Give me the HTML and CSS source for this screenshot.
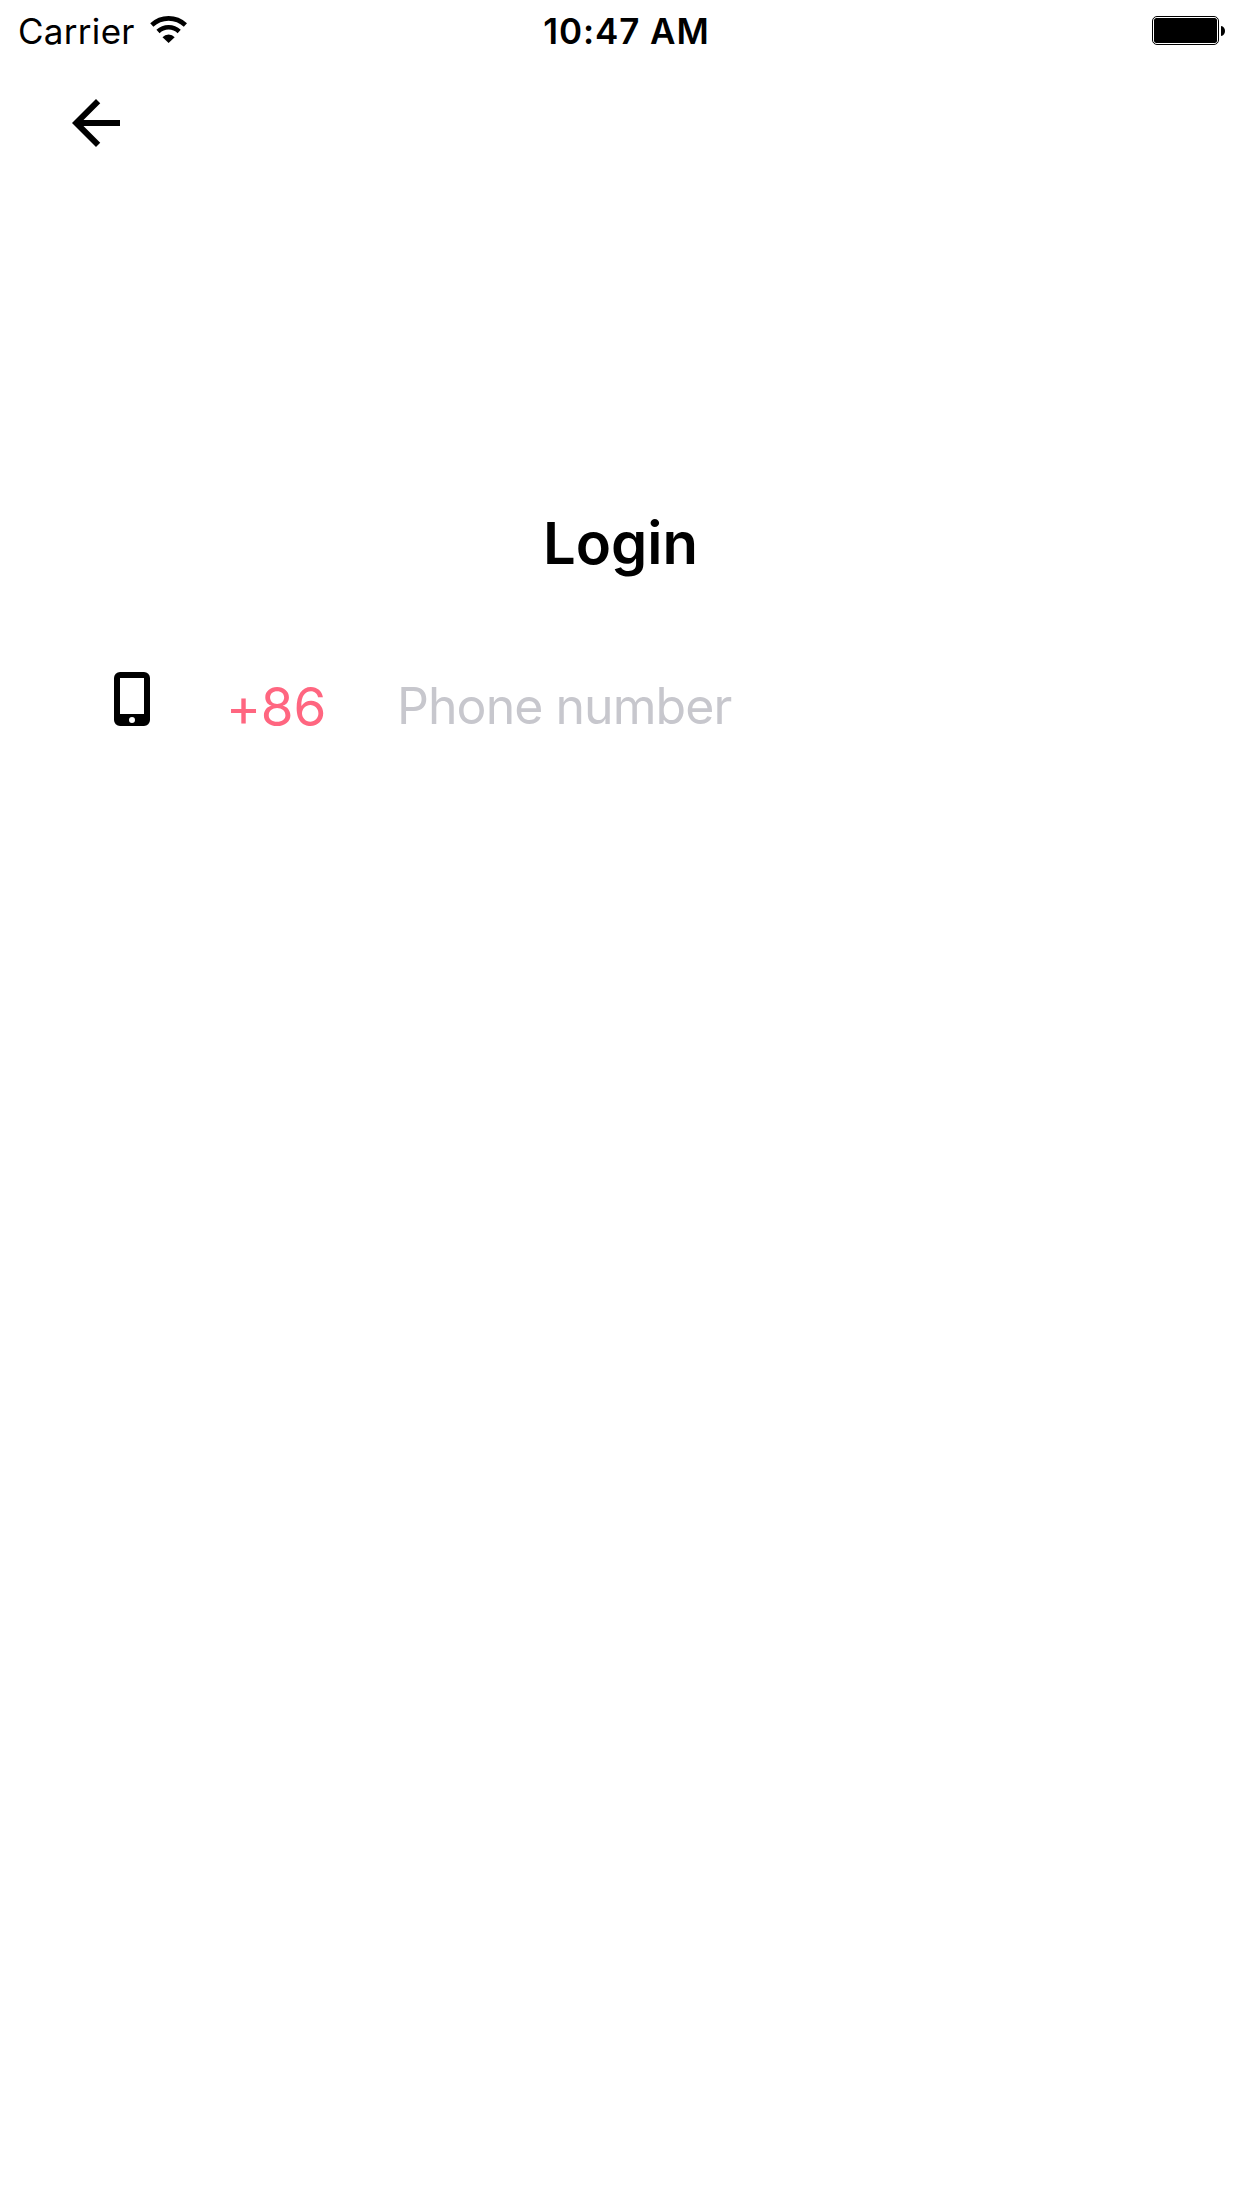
FILE: index.html
```html
<!DOCTYPE html>
<html lang="en">
<head>
<meta charset="utf-8">
<title>Login</title>
<link rel="stylesheet" href="styles.css">
</head>
<body>
<header class="status-bar">
  <div class="network">
    <span class="carrier">Carrier</span>
    <svg class="wifi" width="38" height="28" viewBox="0 0 38 28" aria-hidden="true">
      <g fill="none" stroke="#000" stroke-width="4.6">
        <path d="M1.800 9a24.500 24.500 0 0 1 33.600 0"/>
        <path d="M8 15.500a15.500 15.500 0 0 1 21.200 0"/>
      </g>
      <path d="M12.500 21.300a8 8 0 0 1 12.200 0L18.600 27z"/>
    </svg>
  </div>
  <time class="clock">10:47 AM</time>
  <svg class="battery" width="74" height="30" viewBox="0 0 74 30" aria-hidden="true">
    <rect x=".5" y=".5" width="66" height="28" rx="4.5" fill="none" stroke="#000"/>
    <rect x="2" y="2" width="63" height="25" rx="2.5"/>
    <path d="M69 10c2.700.4 4 2.300 4 5s-1.300 4.600-4 5z"/>
  </svg>
</header>
<nav class="nav-bar">
  <svg class="back" width="72" height="72" viewBox="0 0 24 24" role="img" aria-label="Back">
    <path d="M20 11H7.830l5.590-5.590L12 4l-8 8 8 8 1.410-1.410L7.830 13H20v-2z"/>
  </svg>
</nav>
<main class="login">
  <h1 class="title">Login</h1>
  <form class="phone-row">
    <svg class="phone-icon" width="36" height="54" viewBox="0 0 36 54" aria-hidden="true">
      <path fill-rule="evenodd" d="M6 0h24a6 6 0 0 1 6 6v42a6 6 0 0 1-6 6H6a6 6 0 0 1-6-6V6a6 6 0 0 1 6-6zM6 6v36h24V6zM18 45a3 3 0 1 0 0 6 3 3 0 0 0 0-6z"/>
    </svg>
    <span class="country-code">+86</span>
    <input class="phone-input" type="tel" placeholder="Phone number" aria-label="Phone number">
  </form>
</main>
</body>
</html>
```
FILE: styles.css
```css
* {
  box-sizing: border-box;
}

body {
  margin: 0;
  min-height: 2208px;
  background: #fff;
  color: #000;
  font-family: Inter, "Liberation Sans", sans-serif;
}

.status-bar {
  display: grid;
  grid-template-columns: 1fr auto 1fr;
  height: 60px;
  padding: 0 16px 0 18px;
  line-height: 62px;
}

.network {
  display: flex;
}

.carrier {
  font-size: 35px;
  letter-spacing: 0.3px;
}

.wifi {
  margin: 16px 0 0 15px;
}

.clock {
  padding-left: 9px;
  font-size: 35px;
  font-weight: 600;
  letter-spacing: 0.9px;
}

.battery {
  justify-self: end;
  margin-top: 16px;
}

.nav-bar {
  height: 132px;
  padding: 27px 60px;
}

.back {
  display: block;
}

.login {
  padding: 311px 60px 0;
}

.title {
  margin: 0;
  font-size: 58px;
  font-weight: 600;
  line-height: 80px;
  text-align: center;
  text-indent: -1px;
}

.phone-row {
  display: flex;
  margin-top: 77px;
  padding-left: 54px;
}

.phone-icon {
  flex: none;
  margin-top: 12px;
}

.country-code {
  flex: none;
  width: 171px;
  margin-left: 76px;
  color: #ff6680;
  font-size: 53px;
  line-height: 94px;
  letter-spacing: -0.2px;
}

.phone-input {
  flex: none;
  width: 600px;
  height: 92px;
  padding: 0;
  border: 0;
  outline: 0;
  background: transparent;
  font: 50px/92px Inter, "Liberation Sans", sans-serif;
  letter-spacing: -0.95px;
}

.phone-input::placeholder {
  color: #c7c7cd;
  opacity: 1;
}
```
